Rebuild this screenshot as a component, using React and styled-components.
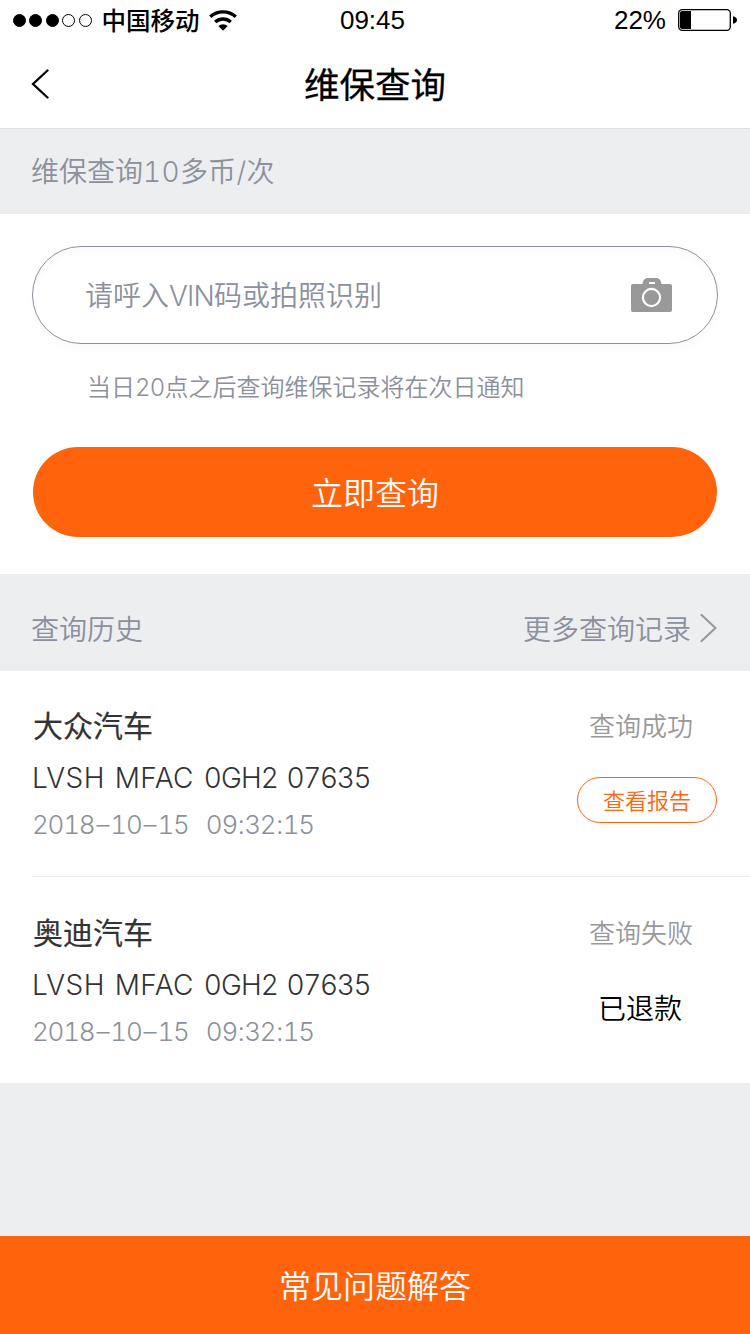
import React from 'react';
import styled, { createGlobalStyle } from 'styled-components';

const GlobalStyle = createGlobalStyle`
  * { box-sizing: border-box; }
  body { margin: 0; background: #edeef0; }
  button { font: inherit; margin: 0; padding: 0; border: 0; cursor: pointer; }
`;

const ORANGE = '#ff640d';
const SLATE = '#8c909c';

const Page = styled.div`
  display: flex;
  flex-direction: column;
  width: 750px;
  height: 1334px;
  background: #edeef0;
  font-family: Inter, 'Noto Sans CJK SC', sans-serif;
  font-variant-numeric: tabular-nums;
  color: #000;
`;

const StatusBar = styled.div`
  display: grid;
  grid-template-columns: 1fr auto 1fr;
  align-items: center;
  height: 40px;
  padding: 0 13px;
  background: #fff;
  font-family: 'Liberation Sans', 'Noto Sans CJK SC', sans-serif;
  font-size: 26px;
  line-height: 40px;
`;

const Carrier = styled.div`
  display: flex;
  align-items: center;
`;

const Dots = styled.div`
  display: flex;
  gap: 3.4px;
  margin-right: 10px;
`;

const Dot = styled.i`
  width: 13px;
  height: 13px;
  border: 1px solid #000;
  border-radius: 50%;
  background: ${(p) => (p.$on ? '#000' : '#fff')};
`;

const CarrierName = styled.span`
  padding-top: 4px;
  margin-right: 9px;
  font-size: 24.5px;
  font-weight: 500;
  line-height: 36px;
`;

const Clock = styled.span`
  padding-right: 5px;
`;

const Battery = styled.div`
  display: flex;
  justify-content: flex-end;
  align-items: center;
  gap: 12px;
`;

const NavBar = styled.header`
  display: grid;
  grid-template-columns: 120px 1fr 120px;
  align-items: center;
  height: 89px;
  border-bottom: 1px solid #dfe0e2;
  background: #fff;
`;

const BackButton = styled.button`
  display: flex;
  padding-left: 31px;
  background: none;
`;

const Title = styled.h1`
  margin: 0;
  padding-top: 4px;
  text-align: center;
  font-size: 35.5px;
  font-weight: 400;
  line-height: 84px;
  -webkit-text-stroke: 0.3px #000;
`;

const Notice = styled.div`
  height: 85px;
  padding: 2px 0 0 31px;
  font-size: 28px;
  font-weight: 350;
  line-height: 83px;
  color: ${SLATE};
`;

const NoticePrice = styled.span`
  letter-spacing: 0.4px;
`;

const Form = styled.section`
  display: flex;
  flex-direction: column;
  height: 360px;
  padding: 32px 32px 0;
  background: #fff;
`;

const Field = styled.div`
  display: flex;
  align-items: center;
  justify-content: space-between;
  height: 98px;
  padding: 0 45px 0 52px;
  border: 1px solid ${SLATE};
  border-radius: 49px;
  box-shadow: 0 6px 10px rgba(0, 0, 0, 0.02), inset 0 6px 10px rgba(0, 0, 0, 0.02);
  font-size: 28px;
  font-weight: 350;
  color: ${SLATE};
`;

const Placeholder = styled.span`
  padding-bottom: 2px;
`;

const Tight = styled.span`
  letter-spacing: -0.8px;
`;

const Hint = styled.p`
  margin: 24px 0 0 55px;
  font-size: 24px;
  font-weight: 350;
  line-height: 40px;
  color: ${SLATE};
`;

const SubmitButton = styled.button`
  height: 90px;
  margin: 39px 1px 0;
  padding-bottom: 3px;
  border-radius: 45px;
  background: ${ORANGE};
  color: #fff;
  font-size: 32px;
  font-weight: 350;
`;

const HistoryHeader = styled.div`
  display: flex;
  align-items: center;
  justify-content: space-between;
  height: 97px;
  padding: 10px 33px 0 31px;
  font-size: 28px;
  font-weight: 350;
  color: ${SLATE};
`;

const MoreLink = styled.div`
  display: flex;
  align-items: center;
  gap: 9px;
`;

const List = styled.div`
  background: #fff;
`;

const Item = styled.article`
  display: flex;
  justify-content: space-between;
  height: 206px;
  margin-left: 32px;
  padding: ${(p) => (p.$last ? 35 : 34)}px 33px 0 0;
  border-bottom: 1px solid ${(p) => (p.$last ? '#fff' : '#ebecee')};
`;

const Info = styled.div`
  display: flex;
  flex-direction: column;
  color: #333;
`;

const CarName = styled.div`
  padding-left: 1px;
  font-size: 30px;
  font-weight: 400;
  line-height: 42px;
  -webkit-text-stroke: 0.2px #333;
`;

const Vin = styled.div`
  margin-top: 11px;
  font-size: 28px;
  font-weight: 300;
  line-height: 40px;
  word-spacing: 2px;
`;

const VinPart = styled.span`
  letter-spacing: ${(p) => p.$spacing}px;
`;

const Stamp = styled.div`
  margin-top: 7px;
  font-size: 26px;
  font-weight: 300;
  line-height: 40px;
  letter-spacing: -1.2px;
  word-spacing: 2.8px;
  color: ${SLATE};
  white-space: pre;
`;

const Mark = styled.span`
  padding: 0 ${(p) => p.$pad}px;
`;

const Result = styled.div`
  display: flex;
  flex-direction: column;
  align-items: center;
  width: 140px;
`;

const ResultText = styled.div`
  margin: 1px 12px 0 0;
  font-size: 26px;
  font-weight: 350;
  line-height: 42px;
  color: #999;
`;

const ReportButton = styled.button`
  width: 140px;
  height: 46px;
  margin-top: 29px;
  padding-bottom: 2px;
  border: 1px solid ${ORANGE};
  border-radius: 23px;
  background: #fff;
  color: ${ORANGE};
  font-size: 22px;
  font-weight: 350;
`;

const Refunded = styled.div`
  margin: 33px 14px 0 0;
  font-size: 28px;
  font-weight: 350;
  line-height: 42px;
`;

const Footer = styled.button`
  height: 98px;
  margin-top: auto;
  padding-bottom: 2px;
  background: ${ORANGE};
  color: #fff;
  font-size: 32px;
  font-weight: 350;
`;

const WifiIcon = () => (
  <svg width="28" height="21" viewBox="0 0 28 21">
    <path d="M1.2 6.8a19 19 0 0 1 25.6 0M6.2 12a11.8 11.8 0 0 1 15.6 0" fill="none" stroke="#000" strokeWidth="3.4" />
    <path d="M9.3 16a7 7 0 0 1 9.4 0L14 20.7z" />
  </svg>
);

const BatteryIcon = () => (
  <svg width="59" height="22" viewBox="0 0 59 22">
    <rect x=".7" y=".7" width="51.6" height="20.6" rx="3.5" fill="none" stroke="#000" strokeWidth="1.3" />
    <path d="M4 2h9v18H4a2 2 0 0 1-2-2V4a2 2 0 0 1 2-2z" />
    <path d="M55 7.2q4 1 4 3.8t-4 3.8z" />
  </svg>
);

const CameraIcon = () => (
  <svg width="41" height="34" viewBox="0 0 41 34">
    <path fill="#999" d="M2 6h9.500C12 2.500 13.500 0 17 0h8c3.500 0 5 2.500 5.500 6H39a2 2 0 0 1 2 2v24a2 2 0 0 1-2 2H2a2 2 0 0 1-2-2V8a2 2 0 0 1 2-2z" />
    <rect x="18" y="4" width="6" height="2" rx=".6" fill="#fff" />
    <circle cx="20.500" cy="19.500" r="8.600" fill="none" stroke="#fff" strokeWidth="2.200" />
  </svg>
);

const records = [
  { name: '大众汽车', status: '查询成功', ok: true },
  { name: '奥迪汽车', status: '查询失败', ok: false },
];

export default function App() {
  return (
    <Page>
      <GlobalStyle />
      <StatusBar>
        <Carrier>
          <Dots>
            {[1, 1, 1, 0, 0].map((on, i) => <Dot key={i} $on={on} />)}
          </Dots>
          <CarrierName>中国移动</CarrierName>
          <WifiIcon />
        </Carrier>
        <Clock>09:45</Clock>
        <Battery>
          <span>22%</span>
          <BatteryIcon />
        </Battery>
      </StatusBar>
      <NavBar>
        <BackButton aria-label="返回">
          <svg width="18" height="30" viewBox="0 0 18 30">
            <path d="M16.500 1.500 2 15l14.500 13.500" fill="none" stroke="#000" strokeWidth="2.300" strokeLinecap="round" />
          </svg>
        </BackButton>
        <Title>维保查询</Title>
      </NavBar>
      <Notice>维保查询<NoticePrice>10</NoticePrice>多币<Mark $pad={0.4}>/</Mark>次</Notice>
      <Form>
        <Field>
          <Placeholder>请呼入<Tight>VIN</Tight>码或拍照识别</Placeholder>
          <CameraIcon />
        </Field>
        <Hint>当日<Tight>20</Tight>点之后查询维保记录将在次日通知</Hint>
        <SubmitButton>立即查询</SubmitButton>
      </Form>
      <HistoryHeader>
        <span>查询历史</span>
        <MoreLink>
          <span>更多查询记录</span>
          <svg width="17" height="28" viewBox="0 0 17 28">
            <path d="M1.500 1 15.500 14 1.500 27" fill="none" stroke="#999" strokeWidth="2.200" strokeLinecap="round" />
          </svg>
        </MoreLink>
      </HistoryHeader>
      <List>
        {records.map((r) => (
          <Item key={r.name} $last={!r.ok}>
            <Info>
              <CarName>{r.name}</CarName>
              <Vin>
                <VinPart $spacing={0.4}>LVSH MFAC </VinPart>
                <VinPart $spacing={-0.9}>0GH2 </VinPart>
                <VinPart $spacing={-1.4}>07635</VinPart>
              </Vin>
              <Stamp>
                2018<Mark $pad={2}>–</Mark>10<Mark $pad={2}>–</Mark>15{'  '}
                09<Mark $pad={0.7}>:</Mark>32<Mark $pad={0.7}>:</Mark>15
              </Stamp>
            </Info>
            <Result>
              <ResultText>{r.status}</ResultText>
              {r.ok ? <ReportButton>查看报告</ReportButton> : <Refunded>已退款</Refunded>}
            </Result>
          </Item>
        ))}
      </List>
      <Footer>常见问题解答</Footer>
    </Page>
  );
}
